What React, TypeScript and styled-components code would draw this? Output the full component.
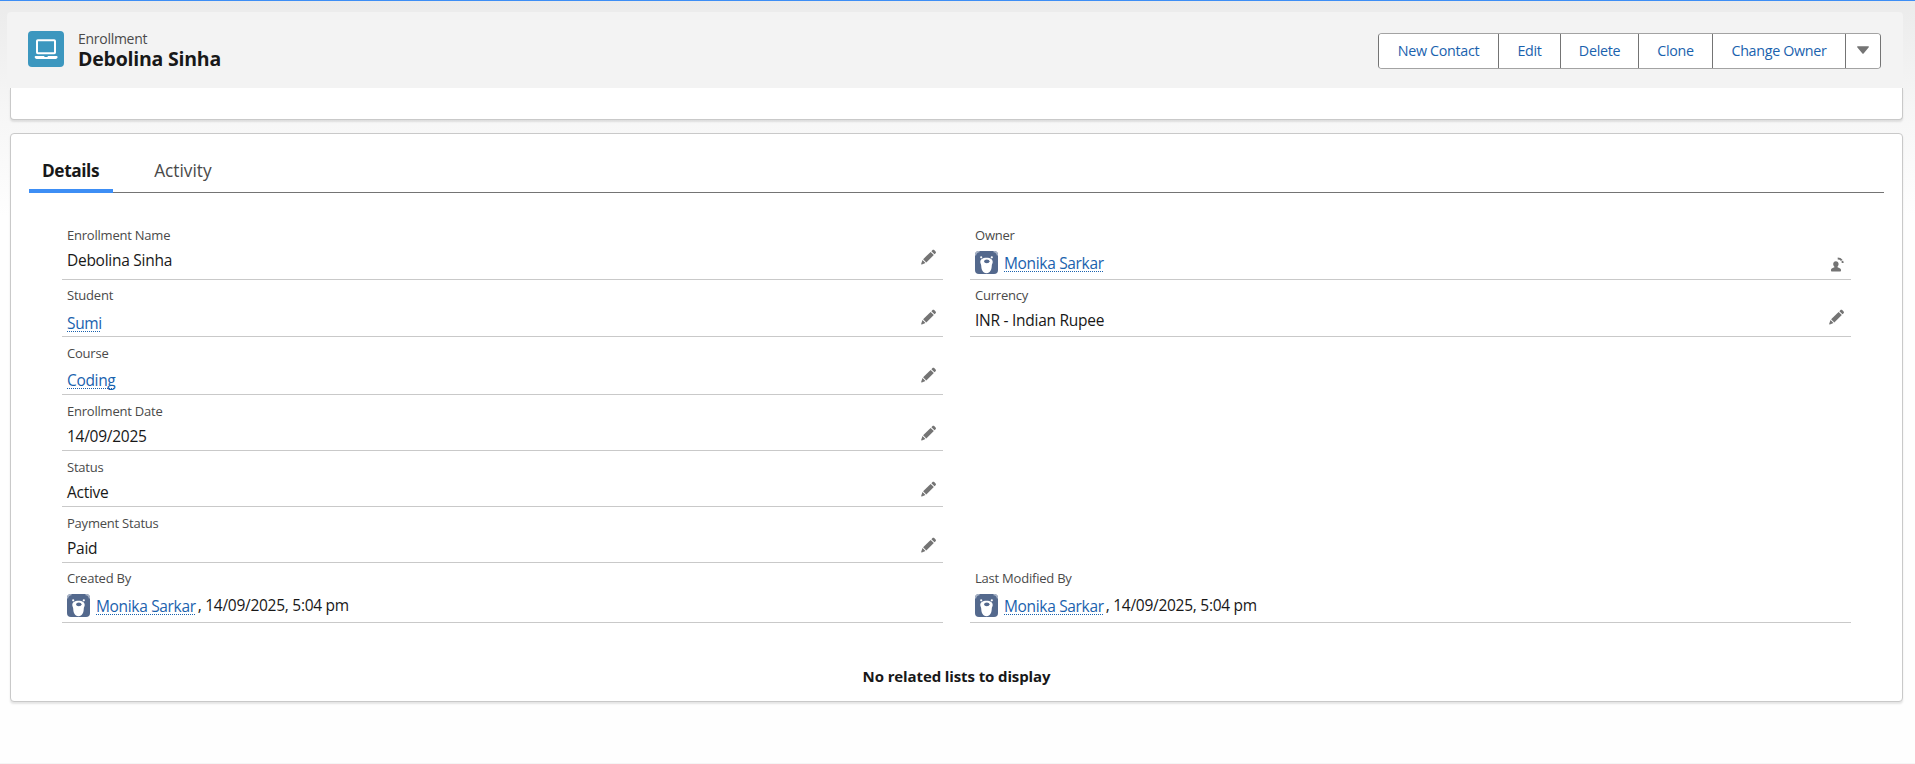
import React from 'react';
import styled, { createGlobalStyle } from 'styled-components';

const GlobalStyle = createGlobalStyle`
  * { box-sizing: border-box; }
  body {
    margin: 0;
    background: #fefefe;
    color: #181818;
    font-family: 'Open Sans', 'Noto Sans', sans-serif;
    overflow: hidden;
  }
`;

const Page = styled.div`
  height: 764px;
  border-top: 1px solid #3d8ef5;
  border-bottom: 1px solid #f5f5f5;
  padding: 11px 12px 0 7px;
  background: linear-gradient(to bottom, #ebebeb 0, #f6f6f6 110px, #fefefe 215px);
`;

const Header = styled.header`
  display: flex;
  align-items: flex-start;
  height: 76px;
  padding: 19px 22px 0 21px;
  background: #f3f3f3;
  border-radius: 4px;
`;

const EntityIcon = styled.div`
  display: flex;
  width: 36px;
  height: 36px;
  border-radius: 4px;
  background: #3c97bf;
`;

const Titles = styled.div`
  flex: 1;
  padding-left: 14px;
`;

const EntityName = styled.div`
  margin-top: -2px;
  font-size: 14px;
  line-height: 20px;
  letter-spacing: -0.28px;
  color: #4a4a4a;
`;

const RecordName = styled.h1`
  margin: -1px 0 0;
  font-size: 19.5px;
  line-height: 22px;
  letter-spacing: -0.22px;
  font-weight: 700;
`;

const ButtonGroup = styled.div`
  display: flex;
  height: 36px;
  margin-top: 2px;
  border: 1px solid #747474;
  border-top-color: #a3a3a3;
  border-bottom-color: #a3a3a3;
  border-radius: 4px;
  background: #fff;
  overflow: hidden;
`;

const ActionButton = styled.button<{ $width: number }>`
  display: flex;
  align-items: center;
  justify-content: center;
  width: ${(p) => p.$width}px;
  padding: 0 0 2px;
  border: 0;
  background: #fff;
  color: #1a62ae;
  font-family: inherit;
  font-size: 14.3px;
  letter-spacing: -0.31px;
  white-space: nowrap;

  & + & { border-left: 1px solid #747474; }
`;

const Card = styled.section`
  margin: 0 0 0 3px;
  background: #fff;
  border: 1px solid #c9c9c9;
  border-radius: 4px;
  box-shadow: 0 2px 2px rgba(0, 0, 0, 0.1);
`;

const HighlightsCard = styled(Card)`
  height: 32px;
  border-top: 0;
  border-radius: 0 0 4px 4px;
`;

const RecordCard = styled(Card)`
  height: 569px;
  margin-top: 13px;
  padding: 18px 18px 0;
`;

const TabBar = styled.nav`
  display: flex;
  height: 41px;
  border-bottom: 1px solid #747474;
`;

const Tab = styled.div<{ $active?: boolean }>`
  height: 41px;
  padding: 0 14px 0 13px;
  margin-right: 27px;
  font-size: 17.3px;
  line-height: 38px;
  font-weight: ${(p) => (p.$active ? 700 : 400)};
  letter-spacing: ${(p) => (p.$active ? '-0.42px' : '0')};
  color: ${(p) => (p.$active ? '#181818' : '#4a4a4a')};
  border-bottom: 4px solid ${(p) => (p.$active ? '#3d8ef5' : 'transparent')};

  & + & { padding-left: 14px; }
`;

const Columns = styled.div`
  display: flex;
  justify-content: space-between;
  padding: 27px 33px 0 33px;
`;

const Column = styled.div`
  display: flex;
  flex-direction: column;
  width: 881px;
`;

const FieldRow = styled.div<{ $height: number; $top?: number; $bottom?: number }>`
  display: flex;
  flex-direction: column;
  justify-content: space-between;
  height: ${(p) => p.$height}px;
  padding: ${(p) => p.$top ?? 7}px 6px ${(p) => p.$bottom ?? 4}px 5px;
  border-bottom: 1px solid #c9c9c9;
`;

const EmptyRows = styled.div`
  height: 226px;
`;

const Label = styled.div`
  font-size: 13px;
  line-height: 18px;
  letter-spacing: -0.22px;
  color: #4a4a4a;
`;

const ValueLine = styled.div`
  display: flex;
  justify-content: space-between;
  height: 20px;
  font-size: 15.5px;
  line-height: 20px;
  letter-spacing: -0.27px;
  white-space: pre;
`;

const Action = styled.div<{ $lift: number }>`
  display: flex;
  margin-top: ${(p) => -p.$lift}px;
`;

const Person = styled.span`
  display: flex;
`;

const Avatar = styled.svg`
  width: 23px;
  height: 23px;
  margin: -2px 6px 0 0;
`;

const Link = styled.a`
  color: #1a62ae;
  letter-spacing: -0.33px;
  text-decoration: underline dotted 1px;
  text-underline-offset: 2px;
  text-decoration-skip-ink: none;
`;

const Stamp = styled.span`
  margin: -1px 0 0 2px;
`;

const EmptyMessage = styled.div`
  margin-top: 41px;
  text-align: center;
  font-size: 15px;
  line-height: 24px;
  letter-spacing: -0.11px;
  font-weight: 700;
`;

const LaptopIcon = () => (
  <svg width="36" height="36" viewBox="0 0 36 36" fill="none">
    <rect x="9" y="9.2" width="18" height="13" rx="0.8" stroke="#fff" strokeWidth="2" />
    <path d="M8 25h7.7c.2 0 .3.1.4.3.2.5.5.7 1 .7h1.8c.5 0 .8-.2 1-.7.1-.2.2-.3.4-.3H28c.9 0 1.6.4 1.6 1 0 1-.8 1.9-2 1.9H8.7c-1.2 0-2-.9-2-1.9 0-.6.5-1 1.300-1z" fill="#fff" />
  </svg>
);

const PencilIcon = () => (
  <svg width="17" height="17" viewBox="0 0 17 17" fill="#747474">
    <path d="M3.100 10.200 10.600 2.900l3.200 3.200-7.500 7.400z" />
    <path d="m11.400 2.200 1.100-1.100c.5-.5 1.200-.5 1.700 0l1.400 1.400c.5.5.5 1.200 0 1.700l-1.100 1.100z" />
    <path d="m2.500 11.100 3 3-3.600 1.300c-.5.200-.9-.2-.7-.7z" />
  </svg>
);

const ChangeOwnerIcon = () => (
  <svg width="15" height="16" viewBox="0 0 15 16" fill="#747474">
    <path d="M5.900 4.300c1.600 0 2.700 1.200 2.700 2.700 0 1.100-.5 1.800-1 2.400-.3.500-.1.900.5 1.200 1.500.6 2.900 1.100 2.900 2.500v.5c0 .6-.4 1-1 1H2c-.6 0-1-.4-1-1v-.5c0-1.400 1.300-1.900 2.800-2.500.6-.3.800-.7.400-1.200-.5-.6-1-1.300-1-2.400 0-1.500 1.100-2.700 2.700-2.700z" />
    <path d="M7.700 1.500c2.800 0 5 1.900 5 4.600" fill="none" stroke="#747474" strokeWidth="1.900" strokeDasharray="4.500 .8" />
  </svg>
);

const BearAvatar = () => (
  <Avatar viewBox="0 0 23 23">
    <rect width="23" height="23" rx="4" fill="#54698d" />
    <path d="M.4 4.500C.6 2 2 .6 4.500.4M18.500.4C21 .6 22.400 2 22.600 4.500" stroke="#a9b4c7" strokeWidth="1.500" fill="none" />
    <circle cx="6.200" cy="6.300" r="1.100" fill="#fff" />
    <circle cx="16.800" cy="6.300" r="1.100" fill="#fff" />
    <path d="M11.500 6.800c4.100 0 6.200 1.700 6.200 4.200 0 1.500-.8 2-.9 3.500-.2 4-1.400 7.700-5.300 7.700s-5.100-3.700-5.300-7.700c-.1-1.500-.9-2-.9-3.500 0-2.500 2.100-4.200 6.200-4.200z" fill="#fff" />
    <ellipse cx="11.800" cy="10.300" rx="2.700" ry="1.900" fill="#54698d" />
  </Avatar>
);

const User = ({ stamp }: { stamp?: string }) => (
  <Person>
    <BearAvatar />
    <Link>Monika Sarkar</Link>
    {stamp && <Stamp>, {stamp}</Stamp>}
  </Person>
);

interface FieldProps {
  label: string;
  height: number;
  top?: number;
  bottom?: number;
  lift?: number;
  icon?: React.ReactNode;
  children: React.ReactNode;
}

const Field = ({ label, height, top, bottom, lift = 0, icon, children }: FieldProps) => (
  <FieldRow $height={height} $top={top} $bottom={bottom}>
    <Label>{label}</Label>
    <ValueLine>
      <span>{children}</span>
      {icon && <Action $lift={lift}>{icon}</Action>}
    </ValueLine>
  </FieldRow>
);

export default function App() {
  return (
    <>
      <GlobalStyle />
      <Page>
        <Header>
          <EntityIcon><LaptopIcon /></EntityIcon>
          <Titles>
            <EntityName>Enrollment</EntityName>
            <RecordName>Debolina Sinha</RecordName>
          </Titles>
          <ButtonGroup>
            <ActionButton $width={119}>New Contact</ActionButton>
            <ActionButton $width={62}>Edit</ActionButton>
            <ActionButton $width={78}>Delete</ActionButton>
            <ActionButton $width={74}>Clone</ActionButton>
            <ActionButton $width={133}>Change Owner</ActionButton>
            <ActionButton $width={35} aria-label="More actions">
              <svg width="12" height="8" viewBox="0 0 12 8" fill="#747474">
                <path d="M.7.200h10.600c.6 0 .8.600.500 1L6.600 7.400c-.3.400-.9.400-1.200 0L.2 1.200C-.1.800.100.200.700.200z" />
              </svg>
            </ActionButton>
          </ButtonGroup>
        </Header>
        <HighlightsCard />
        <RecordCard>
          <TabBar>
            <Tab $active>Details</Tab>
            <Tab>Activity</Tab>
          </TabBar>
          <Columns>
            <Column>
              <Field label="Enrollment Name" height={60} top={6} bottom={9} lift={1} icon={<PencilIcon />}>Debolina Sinha</Field>
              <Field label="Student" height={57} top={6} bottom={3} lift={4} icon={<PencilIcon />}><Link>Sumi</Link></Field>
              <Field label="Course" height={58} lift={3} icon={<PencilIcon />}><Link>Coding</Link></Field>
              <Field label="Enrollment Date" height={56} icon={<PencilIcon />} lift={1}>14/09/2025</Field>
              <Field label="Status" height={56} icon={<PencilIcon />} lift={1}>Active</Field>
              <Field label="Payment Status" height={56} icon={<PencilIcon />} lift={1}>Paid</Field>
              <Field label="Created By" height={60} top={6} bottom={6}><User stamp="14/09/2025, 5:04 pm" /></Field>
            </Column>
            <Column>
              <Field label="Owner" height={60} top={6} bottom={6} icon={<ChangeOwnerIcon />} lift={-4}><User /></Field>
              <Field label="Currency" height={57} top={6} bottom={6} lift={1} icon={<PencilIcon />}>INR - Indian Rupee</Field>
              <EmptyRows />
              <Field label="Last Modified By" height={60} top={6} bottom={6}><User stamp="14/09/2025, 5:04 pm" /></Field>
            </Column>
          </Columns>
          <EmptyMessage>No related lists to display</EmptyMessage>
        </RecordCard>
      </Page>
    </>
  );
}
